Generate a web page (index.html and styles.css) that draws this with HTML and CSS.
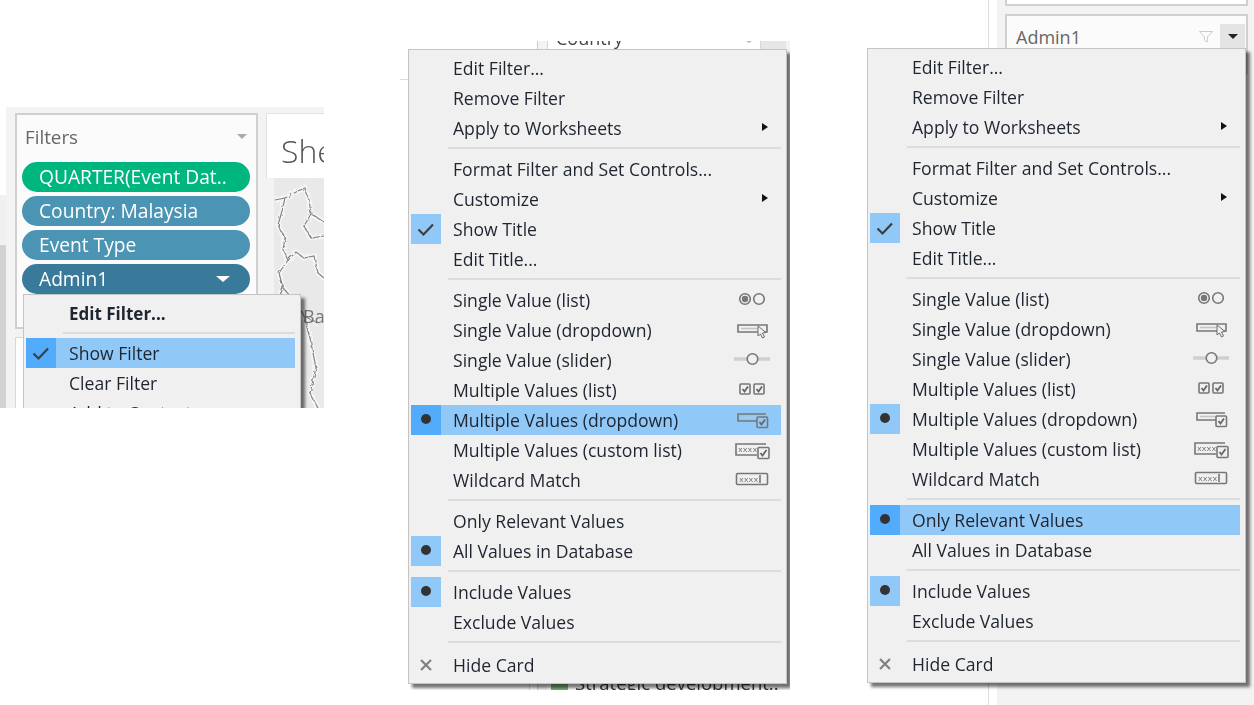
FILE: index.html
```html
<!DOCTYPE html>
<html lang="en">
<head>
    <meta charset="UTF-8">
    <title>Filter menus</title>
    <link rel="stylesheet" href="styles.css">
</head>
<body>
<svg class="defs" width="0" height="0">
    <filter id="jag" x="-10%" y="-10%" width="120%" height="120%">
        <feTurbulence type="fractalNoise" baseFrequency=".22" numOctaves="2" seed="4"/>
        <feDisplacementMap in="SourceGraphic" scale="4"/>
    </filter>
    <symbol id="i-radio" viewBox="0 0 36 22">
        <circle cx="11" cy="10" r="5.300" class="ln"/><circle cx="11" cy="10" r="3.200" class="fl"/>
        <circle cx="25" cy="10" r="5.300" class="ln"/>
    </symbol>
    <symbol id="i-drop" viewBox="0 0 36 22">
        <path d="M4 6h29v7h-29z" class="ln"/><path d="M7 9.500h18" class="lt"/>
        <path d="M24 7l0 10 2.500-2 2 4 2-1-2-4 3.500-.5z" class="cur"/>
    </symbol>
    <symbol id="i-slider" viewBox="0 0 36 22">
        <path d="M0 10h37" class="track"/><circle cx="18.500" cy="10" r="5.300" class="knob"/>
    </symbol>
    <symbol id="i-checks" viewBox="0 0 36 22">
        <rect x="6" y="5" width="10" height="10" rx="1" class="ln"/><path d="M8.500 10l2 2.500 3.500-5" class="ck"/>
        <rect x="20" y="5" width="10" height="10" rx="1" class="ln"/><path d="M22.500 10l2 2.500 3.500-5" class="ck"/>
    </symbol>
    <symbol id="i-dropcheck" viewBox="0 0 36 22">
        <path d="M32 5h-28v7h19" class="ln"/><path d="M7 8.500h17" class="lt"/>
        <rect x="23" y="8" width="10.500" height="10.500" rx="1" class="ln"/><path d="M25.500 13l2 2.500 3.500-5" class="ck"/>
    </symbol>
    <symbol id="i-custom" viewBox="0 0 36 22">
        <path d="M32 5h-30v11h21" class="ln"/><text x="4" y="13" class="xs">xxxx</text>
        <rect x="24" y="8.500" width="11" height="11" rx="1" class="ln box"/><path d="M26.500 14l2 2.500 4-5.500" class="ck"/>
    </symbol>
    <symbol id="i-wild" viewBox="0 0 36 22">
        <rect x="2.500" y="4.500" width="31" height="11" rx="1" class="ln"/><text x="5" y="12.500" class="xs">xxxx</text>
        <path d="M26 6v8" class="ln"/>
    </symbol>
    <symbol id="i-check" viewBox="0 0 30 30">
        <path d="M7.500 15.500l5 5 9.500-10" class="tick"/>
    </symbol>
    <symbol id="i-close" viewBox="0 0 30 30">
        <path d="M10 10l10 10m0-10l-10 10" class="cross"/>
    </symbol>
</svg>

<!-- left piece of the screenshot -->
<section class="crop crop-left">
    <div class="strip"><i class="strip-a"></i><i class="strip-b"></i></div>
    <div class="side">
        <div class="card filters">
            <div class="card-head"><span>Filters</span><i class="caret"></i></div>
            <div class="pill pill-green">QUARTER(Event Dat..</div>
            <div class="pill pill-blue">Country: Malaysia</div>
            <div class="pill pill-blue">Event Type</div>
            <div class="pill pill-dark"><span>Admin1</span><i class="pill-arrow"></i></div>
        </div>
        <div class="card lower"></div>
    </div>
    <div class="sheet">
        <div class="sheet-title">Sheet 1</div>
        <div class="map">
            <svg viewBox="0 0 50 230" width="50" height="230">
                <g class="halo" filter="url(#jag)">
                    <path d="M1 22L11 20 8 33 4 47 11 60 9 72 14 82 5 95 9 110 4 122M11 20L24 13 31 10 35 22 37 36 50 44M37 36L30 48 37 60 50 58M14 82L22 74 30 80 40 78 44 95 50 100M9 110L22 124 30 138 44 145M30 138L36 160 42 190 36 215 44 230"/>
                </g>
                <g class="border" filter="url(#jag)">
                    <path d="M1 22L11 20 8 33 4 47 11 60 9 72 14 82 5 95 9 110 4 122M11 20L24 13 31 10 35 22 37 36 50 44M37 36L30 48 37 60 50 58M14 82L22 74 30 80 40 78 44 95 50 100M9 110L22 124 30 138 44 145M30 138L36 160 42 190 36 215 44 230"/>
                </g>
            </svg>
            <span class="map-label">Ba</span>
        </div>
    </div>
    <div class="menu menu-small">
        <div class="row row-bold"><span class="mark"></span><span>Edit Filter...</span></div>
        <div class="sep sep-small"></div>
        <div class="row row-hot"><span class="mark"><svg><use href="#i-check"/></svg></span><span>Show Filter</span></div>
        <div class="row"><span class="mark"></span><span>Clear Filter</span></div>
        <div class="row"><span class="mark"></span><span>Add to Context</span></div>
    </div>
</section>

<!-- middle piece -->
<section class="crop crop-mid">
    <div class="mid-line"></div>
    <div class="mid-back">
        <div class="mid-panel">
            <div class="mid-top">
                <div class="mid-card"><span>Country</span><i class="mid-caret"></i></div>
                <div class="mid-grey"></div>
            </div>
            <div class="mid-legend"><i class="swatch"></i><span>Strategic development..</span></div>
        </div>
    </div>
    <div class="menu menu-big">
        <div class="row"><span class="mark"></span><span>Edit Filter...</span></div>
        <div class="row"><span class="mark"></span><span>Remove Filter</span></div>
        <div class="row"><span class="mark"></span><span>Apply to Worksheets</span><i class="sub"></i></div>
        <div class="sep"></div>
        <div class="row"><span class="mark"></span><span>Format Filter and Set Controls...</span></div>
        <div class="row"><span class="mark"></span><span>Customize</span><i class="sub"></i></div>
        <div class="row"><span class="mark on"><svg><use href="#i-check"/></svg></span><span>Show Title</span></div>
        <div class="row"><span class="mark"></span><span>Edit Title...</span></div>
        <div class="sep"></div>
        <div class="row"><span class="mark"></span><span>Single Value (list)</span><svg class="ico"><use href="#i-radio"/></svg></div>
        <div class="row"><span class="mark"></span><span>Single Value (dropdown)</span><svg class="ico"><use href="#i-drop"/></svg></div>
        <div class="row"><span class="mark"></span><span>Single Value (slider)</span><svg class="ico"><use href="#i-slider"/></svg></div>
        <div class="row"><span class="mark"></span><span>Multiple Values (list)</span><svg class="ico"><use href="#i-checks"/></svg></div>
        <div class="row row-hot"><span class="mark"><i class="dot"></i></span><span>Multiple Values (dropdown)</span><svg class="ico"><use href="#i-dropcheck"/></svg></div>
        <div class="row"><span class="mark"></span><span>Multiple Values (custom list)</span><svg class="ico"><use href="#i-custom"/></svg></div>
        <div class="row"><span class="mark"></span><span>Wildcard Match</span><svg class="ico"><use href="#i-wild"/></svg></div>
        <div class="sep"></div>
        <div class="row"><span class="mark"></span><span>Only Relevant Values</span></div>
        <div class="row"><span class="mark on"><i class="dot"></i></span><span>All Values in Database</span></div>
        <div class="sep"></div>
        <div class="row"><span class="mark on"><i class="dot"></i></span><span>Include Values</span></div>
        <div class="row"><span class="mark"></span><span>Exclude Values</span></div>
        <div class="sep sep-last"></div>
        <div class="row"><span class="mark"><svg><use href="#i-close"/></svg></span><span>Hide Card</span></div>
    </div>
</section>

<!-- right piece -->
<section class="crop crop-right">
    <div class="right-gap"></div>
    <div class="right-panel">
        <div class="right-card-top"></div>
        <div class="right-card">
            <span>Admin1</span>
            <svg class="funnel" viewBox="0 0 14 12" width="14" height="12"><path d="M.5.500h13l-5 5.500v5l-3-1.500v-3.500z"/></svg>
            <span class="drop-btn"><i></i></span>
        </div>
    </div>
    <div class="menu menu-big">
        <div class="row"><span class="mark"></span><span>Edit Filter...</span></div>
        <div class="row"><span class="mark"></span><span>Remove Filter</span></div>
        <div class="row"><span class="mark"></span><span>Apply to Worksheets</span><i class="sub"></i></div>
        <div class="sep"></div>
        <div class="row"><span class="mark"></span><span>Format Filter and Set Controls...</span></div>
        <div class="row"><span class="mark"></span><span>Customize</span><i class="sub"></i></div>
        <div class="row"><span class="mark on"><svg><use href="#i-check"/></svg></span><span>Show Title</span></div>
        <div class="row"><span class="mark"></span><span>Edit Title...</span></div>
        <div class="sep"></div>
        <div class="row"><span class="mark"></span><span>Single Value (list)</span><svg class="ico"><use href="#i-radio"/></svg></div>
        <div class="row"><span class="mark"></span><span>Single Value (dropdown)</span><svg class="ico"><use href="#i-drop"/></svg></div>
        <div class="row"><span class="mark"></span><span>Single Value (slider)</span><svg class="ico"><use href="#i-slider"/></svg></div>
        <div class="row"><span class="mark"></span><span>Multiple Values (list)</span><svg class="ico"><use href="#i-checks"/></svg></div>
        <div class="row"><span class="mark on"><i class="dot"></i></span><span>Multiple Values (dropdown)</span><svg class="ico"><use href="#i-dropcheck"/></svg></div>
        <div class="row"><span class="mark"></span><span>Multiple Values (custom list)</span><svg class="ico"><use href="#i-custom"/></svg></div>
        <div class="row"><span class="mark"></span><span>Wildcard Match</span><svg class="ico"><use href="#i-wild"/></svg></div>
        <div class="sep"></div>
        <div class="row row-hot"><span class="mark"><i class="dot"></i></span><span>Only Relevant Values</span></div>
        <div class="row"><span class="mark"></span><span>All Values in Database</span></div>
        <div class="sep"></div>
        <div class="row"><span class="mark on"><i class="dot"></i></span><span>Include Values</span></div>
        <div class="row"><span class="mark"></span><span>Exclude Values</span></div>
        <div class="sep sep-last"></div>
        <div class="row"><span class="mark"><svg><use href="#i-close"/></svg></span><span>Hide Card</span></div>
    </div>
</section>
</body>
</html>
```

FILE: styles.css
```css
*{
    box-sizing: border-box;
}
html,body{
    margin: 0;
    height: 100%;
}
body{
    background-color: white;
    color: #1f2530;
    font-family: "Open Sans", "Noto Sans", sans-serif;
    font-size: 17.600px;
    position: relative;
    overflow: hidden;
}
.defs{
    position: absolute;
}
i{
    display: block;
}

/* the three pasted pieces sit freely on the white page */
.crop{
    position: absolute;
    overflow: hidden;
    filter: blur(.3px);
}
.crop-left{
    left: 0;
    top: 107px;
    width: 324px;
    height: 301px;
    display: flex;
}
.crop-mid{
    left: 400px;
    top: 41px;
    width: 390px;
    height: 649px;
}
.crop-right{
    left: 860px;
    top: 0;
    width: 394px;
    height: 705px;
}

/* menu */
.menu{
    position: absolute;
    background-color: #f0f0f0;
    border: 1px solid #c4c4c4;
    box-shadow: 4px 4px 3px rgba(0,0,0,.55);
}
.menu-big{
    width: 379px;
    height: 635px;
    padding: 3px 5px 0 2px;
}
.crop-mid .menu{
    left: 8px;
    top: 8px;
}
.crop-right .menu{
    left: 7px;
    top: 48px;
}
.row{
    display: flex;
    align-items: center;
    height: 30px;
    white-space: nowrap;
}
.mark{
    width: 30px;
    height: 30px;
    margin-right: 12px;
    display: flex;
    align-items: center;
    justify-content: center;
    flex: none;
}
.mark svg{
    width: 30px;
    height: 30px;
}
.mark.on{
    background-color: #90c8f8;
}
.row-hot{
    background-color: #90c8f8;
}
.row-hot .mark{
    background-color: #52acfb;
}
.dot{
    width: 10px;
    height: 10px;
    margin-top: -2px;
    border-radius: 50%;
    background-color: #333;
}
.sep{
    height: 11px;
    padding-top: 4px;
    margin-left: 37px;
}
.sep::before{
    content: "";
    display: block;
    height: 2px;
    background-color: #dcdcdc;
}
.sep-last{
    height: 13px;
}
.sub{
    margin-left: auto;
    margin-right: 13px;
    margin-top: -2px;
    width: 0;
    height: 0;
    border-left: 6px solid #111;
    border-top: 4.5px solid transparent;
    border-bottom: 4.5px solid transparent;
}
.ico{
    width: 36px;
    height: 22px;
    margin-left: auto;
    margin-right: 11px;
}
.ln{
    fill: none;
    stroke: #777;
    stroke-width: 1.600;
}
.fl{
    fill: #777;
}
.lt{
    stroke: #c4c4c4;
    stroke-width: 1.500;
    fill: none;
}
.cur{
    fill: #f0f0f0;
    stroke: #6d6d6d;
    stroke-width: 1;
}
.ck{
    fill: none;
    stroke: #666;
    stroke-width: 1.800;
}
.box{
    fill: #f0f0f0;
}
.xs{
    font-family: "Liberation Mono", monospace;
    font-size: 8px;
    fill: #666;
}
.track{
    stroke: #cfcfcf;
    stroke-width: 3.500;
}
.knob{
    fill: #f0f0f0;
    stroke: #777;
    stroke-width: 1.600;
}
.tick{
    fill: none;
    stroke: #3a3f45;
    stroke-width: 2.200;
}
.cross{
    stroke: #808080;
    stroke-width: 2.200;
    fill: none;
}

/* left piece */
.strip{
    width: 6px;
    flex: none;
    padding-top: 88px;
}
.strip-a{
    height: 50px;
    background-color: #f0f0f0;
}
.strip-b{
    height: 163px;
    background-color: #d2d2d2;
}
.side{
    width: 260px;
    flex: none;
    background-color: #f3f3f3;
    padding: 6px 9px 0;
}
.card{
    width: 243px;
    background-color: #fbfbfb;
    border: 2px solid #d0d0d0;
}
.filters{
    height: 216px;
    padding: 0 5px;
}
.lower{
    height: 80px;
    margin-top: 8px;
    border-width: 1px;
    border-color: #d8d8d8;
    background-color: #fff;
}
.card-head{
    height: 47px;
    display: flex;
    align-items: center;
    justify-content: space-between;
    padding: 0 4px 4px 3px;
    color: #666;
    font-size: 18.800px;
}
.caret{
    width: 0;
    height: 0;
    border-top: 5px solid #aaa;
    border-left: 5px solid transparent;
    border-right: 5px solid transparent;
}
.pill{
    height: 30px;
    width: 228px;
    margin-bottom: 4px;
    padding: 0 17px 1px;
    border-radius: 15px;
    color: white;
    font-size: 19.200px;
    display: flex;
    align-items: center;
    justify-content: space-between;
    white-space: nowrap;
}
.pill-green{
    background-color: #00b67f;
}
.pill-blue{
    background-color: #4b94b3;
}
.pill-dark{
    background-color: #397a9b;
}
.pill-arrow{
    width: 0;
    height: 0;
    margin-right: 3px;
    border-top: 6px solid white;
    border-left: 7px solid transparent;
    border-right: 7px solid transparent;
}
.sheet{
    flex: 1;
    background-color: #f3f3f3;
    padding: 6px 0 0;
    overflow: hidden;
}
.sheet-title{
    height: 65px;
    width: 100px;
    background-color: white;
    border-top: 1px solid #e2e2e2;
    border-left: 1px solid #e2e2e2;
    padding: 16px 0 0 14px;
    font-size: 32px;
    font-weight: 300;
    color: #555;
    line-height: 42px;
    white-space: nowrap;
}
.map{
    position: relative;
    height: 230px;
    margin-left: 8px;
    background-color: #e9e9e9;
}
.map svg{
    display: block;
}
.halo path{
    fill: none;
    stroke: #f6f6f6;
    stroke-width: 5;
}
.border path{
    fill: none;
    stroke: #858585;
    stroke-width: 1.200;
}
.map-label{
    position: absolute;
    left: 29px;
    top: 126px;
    color: #777;
    font-size: 18px;
}
.menu-small{
    left: 23px;
    top: 187px;
    width: 278px;
    height: 130px;
    padding: 4px 5px 0 2px;
}
.menu-small .mark{
    margin-right: 13px;
}
.menu-small .row-bold{
    font-weight: 700;
    font-size: 17px;
    padding-bottom: 2px;
}
.sep-small{
    height: 9px;
    padding-top: 3px;
}

/* middle piece, what shows behind the menu */
.mid-line{
    position: absolute;
    left: 0;
    top: 38px;
    width: 10px;
    border-top: 1px solid #ddd;
}
.mid-back{
    position: absolute;
    left: 129px;
    top: 0;
    width: 261px;
    height: 649px;
    padding-left: 8px;
}
.mid-back::before{
    content: "";
    position: absolute;
    left: 0;
    bottom: 0;
    height: 7px;
    border-left: 1px solid #ddd;
}
.mid-panel{
    height: 100%;
    background-color: #f3f3f3;
    border-left: 1px solid #ccc;
    padding-left: 9px;
    display: flex;
    flex-direction: column;
    justify-content: space-between;
}
.mid-top{
    display: flex;
    height: 10px;
}
.mid-card{
    width: 214px;
    height: 10px;
    background-color: white;
    border: 1px solid #d5d5d5;
    border-top: 0;
    padding-left: 8px;
    position: relative;
    overflow: hidden;
}
.mid-card span{
    position: absolute;
    top: -15px;
    color: #444;
    font-size: 18px;
}
.mid-caret{
    position: absolute;
    right: 8px;
    top: 0;
    border-top: 2px solid #bbb;
    border-left: 3px solid transparent;
    border-right: 3px solid transparent;
}
.mid-grey{
    width: 25px;
    background-color: #e6e6e6;
}
.mid-legend{
    height: 7px;
    display: flex;
    gap: 7px;
    padding-left: 4px;
    background-color: white;
    margin-right: 22px;
    align-items: flex-start;
    line-height: 0;
    color: #333;
    font-size: 18.500px;
    white-space: nowrap;
}
.swatch{
    width: 17px;
    height: 7px;
    background-color: #7fb07f;
    flex: none;
}

/* right piece */
.right-gap{
    position: absolute;
    left: 128px;
    top: 0;
    width: 9px;
    height: 705px;
    border-left: 1px solid #ddd;
}
.right-panel{
    position: absolute;
    left: 137px;
    top: 0;
    width: 257px;
    height: 705px;
    background-color: #f3f3f3;
    padding-left: 8px;
}
.right-card-top{
    width: 243px;
    height: 6px;
    background-color: white;
    border: 2px solid #d0d0d0;
    border-top: 0;
}
.right-card{
    width: 243px;
    height: 60px;
    margin-top: 8px;
    padding: 8px 1px 0 9px;
    background-color: #fbfbfb;
    border: 2px solid #d0d0d0;
    display: flex;
    align-items: flex-start;
    color: #666;
    font-size: 18px;
    line-height: 26px;
}
.funnel{
    margin: 7px 0 0 auto;
}
.funnel path{
    fill: none;
    stroke: #ccc;
}
.drop-btn{
    width: 25px;
    height: 24px;
    margin-left: 7px;
    background-color: #e4e4e4;
    display: flex;
    align-items: center;
    justify-content: center;
}
.drop-btn i{
    width: 0;
    height: 0;
    border-top: 5px solid #222;
    border-left: 5px solid transparent;
    border-right: 5px solid transparent;
}
```
